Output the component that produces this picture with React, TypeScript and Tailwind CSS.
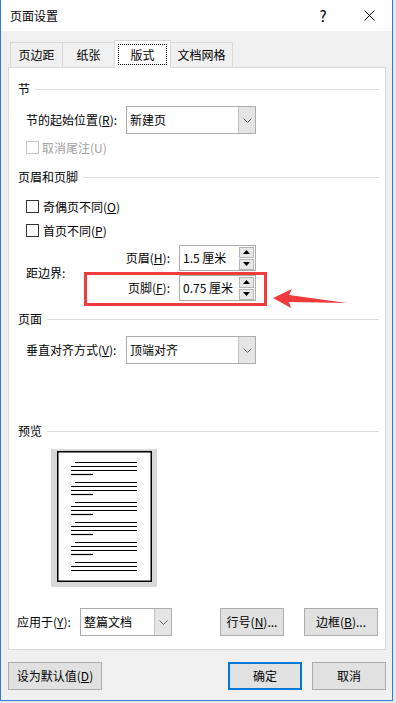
import React from "react";

const Chevron = () => (
  <svg width="9" height="5" viewBox="0 0 9 5">
    <polyline points="0.5,0.5 4.5,4.5 8.5,0.5" fill="none" stroke="#606060" strokeWidth="1" />
  </svg>
);

function Select({ text, w }: { text: string; w: string }) {
  return (
    <div className={`flex h-[28px] ${w} border border-[#acacac] bg-white`}>
      <div className="flex flex-1 items-center pl-[3px]">{text}</div>
      <div className="flex w-[17px] items-center justify-center border-l border-[#c4c4c4] bg-[#e5e5e5]">
        <Chevron />
      </div>
    </div>
  );
}

const Tri = ({ up }: { up: boolean }) => (
  <svg width="7" height="4" viewBox="0 0 7 4">
    <polygon points={up ? "3.5,0 7,4 0,4" : "0,0 7,0 3.5,4"} fill="#000" />
  </svg>
);

function Spinner({ text }: { text: string }) {
  return (
    <div className="ml-[9px] flex h-[26px] w-[77px] items-center border border-[#acacac] bg-white">
      <div className="flex-1 whitespace-nowrap pl-[3px]">{text}</div>
      <div className="mr-[1px] flex w-[15px] flex-col gap-[1px]">
        <div className="flex h-[11px] items-center justify-center border border-[#b4b4b4] bg-[#e8e8e8]">
          <Tri up />
        </div>
        <div className="flex h-[11px] items-center justify-center border border-[#b4b4b4] bg-[#e8e8e8]">
          <Tri up={false} />
        </div>
      </div>
    </div>
  );
}

function Header({ label, cls }: { label: string; cls: string }) {
  return (
    <div className={`flex h-[16px] items-center gap-[5px] pl-[9px] pr-[6px] ${cls}`}>
      <span>{label}</span>
      <div className="h-px flex-1 bg-[#dcdcdc]" />
    </div>
  );
}

function Box({ disabled }: { disabled?: boolean }) {
  return (
    <div
      className={`h-[13px] w-[13px] border bg-white ${disabled ? "border-[#c4c4c4]" : "border-[#333333]"}`}
    />
  );
}

function Btn({ children, cls }: { children: React.ReactNode; cls: string }) {
  return (
    <div
      className={`flex h-[28px] items-center justify-center whitespace-nowrap border border-[#adadad] bg-[#e1e1e1] ${cls}`}
    >
      {children}
    </div>
  );
}

function Preview() {
  const blocks = [0, 1, 2, 3, 4, 5];
  return (
    <svg width="106" height="138" viewBox="0 0 106 138">
      <rect x="0" y="0" width="106" height="138" fill="#d9d9d9" />
      <rect x="6.75" y="2.75" width="93.5" height="129.5" fill="#fff" stroke="#000" strokeWidth="1.5" />
      {blocks.map((b) => {
        const y = 13.5 + b * 20;
        return (
          <g key={b} stroke="#000" strokeWidth="1.2">
            <line x1="24" y1={y} x2="86" y2={y} />
            <line x1="20" y1={y + 4} x2="86" y2={y + 4} />
            <line x1="20" y1={y + 8} x2="86" y2={y + 8} />
            {b < 5 && <line x1="20" y1={y + 12} x2="42" y2={y + 12} />}
          </g>
        );
      })}
    </svg>
  );
}

export default function App() {
  return (
    <div className="relative flex h-[703px] w-[396px] bg-[#e6e6e6] font-['Noto_Sans_CJK_SC','Noto_Sans',sans-serif] text-[12px] leading-[16px] text-black">
      <div className="flex h-[701px] w-[393px] flex-col border-x border-b border-[#2b7fd3] bg-[#f0f0f0]">
        {/* Title bar */}
        <div className="flex h-[31px] items-center bg-white pl-[9px]">
          <span>页面设置</span>
          <div className="ml-auto flex h-full w-[46px] items-center justify-center text-[15px]">?</div>
          <div className="flex h-full w-[46px] items-center justify-center">
            <svg width="11" height="11" viewBox="0 0 11 11">
              <line x1="0.5" y1="0.5" x2="10.5" y2="10.5" stroke="#000" strokeWidth="1" />
              <line x1="10.5" y1="0.5" x2="0.5" y2="10.5" stroke="#000" strokeWidth="1" />
            </svg>
          </div>
        </div>

        <div className="flex flex-col pl-[7px] pr-[6px] pt-[9px]">
          {/* Tabs */}
          <div className="ml-[2px] flex h-[27px] items-end">
            <div className="flex h-[25px] w-[52px] items-center justify-center border-l border-t border-[#d9d9d9]">
              页边距
            </div>
            <div className="flex h-[25px] w-[52px] items-center justify-center border-l border-t border-[#d9d9d9]">
              纸张
            </div>
            <div className="relative z-10 -mb-px flex h-[28px] w-[57px] border-x border-t border-[#d9d9d9] bg-white p-[3px] pb-[3px]">
              <div className="flex flex-1 items-center justify-center border border-dotted border-black">版式</div>
            </div>
            <div className="flex h-[25px] w-[62px] items-center justify-center border-r border-t border-[#d9d9d9]">
              文档网格
            </div>
          </div>

          {/* Panel */}
          <div className="flex h-[583px] flex-col border border-[#d9d9d9] bg-white">
            <Header label="节" cls="mt-[13px]" />
            <div className="ml-[17px] mt-[9px] flex items-center">
              <div className="w-[100px] whitespace-nowrap">
                节的起始位置(<u>R</u>):
              </div>
              <Select text="新建页" w="w-[130px]" />
            </div>
            <div className="ml-[17px] mt-[7px] flex h-[13px] items-center gap-[3px]">
              <Box disabled />
              <span className="text-[#a0a0a0]">取消尾注(U)</span>
            </div>

            <Header label="页眉和页脚" cls="mt-[15px]" />
            <div className="ml-[17px] mt-[15px] flex h-[13px] items-center gap-[4px]">
              <Box />
              <span>
                奇偶页不同(<u>O</u>)
              </span>
            </div>
            <div className="ml-[17px] mt-[11px] flex h-[13px] items-center gap-[4px]">
              <Box />
              <span>
                首页不同(<u>P</u>)
              </span>
            </div>
            <div className="ml-[17px] mt-[8px] flex items-center">
              <div className="w-[100px]">距边界:</div>
              <div className="flex flex-col gap-[4px]">
                <div className="flex items-center">
                  <div className="flex w-[44px] justify-end whitespace-nowrap">
                    <span>
                      页眉(<u>H</u>):
                    </span>
                  </div>
                  <Spinner text="1.5 厘米" />
                </div>
                <div className="flex items-center">
                  <div className="flex w-[44px] justify-end whitespace-nowrap">
                    <span>
                      页脚(<u>F</u>):
                    </span>
                  </div>
                  <Spinner text="0.75 厘米" />
                </div>
              </div>
            </div>

            <Header label="页面" cls="mt-[10px]" />
            <div className="ml-[17px] mt-[9px] flex items-center">
              <div className="w-[100px] whitespace-nowrap">
                垂直对齐方式(<u>V</u>):
              </div>
              <Select text="顶端对齐" w="w-[130px]" />
            </div>

            <Header label="预览" cls="mt-[59px]" />
            <div className="ml-[42px] mt-[10px] flex">
              <Preview />
            </div>

            <div className="ml-[8px] mt-[21px] flex items-center">
              <div className="w-[63px] whitespace-nowrap">
                应用于(<u>Y</u>):
              </div>
              <Select text="整篇文档" w="w-[92px]" />
              <Btn cls="ml-[48px] w-[64px]">
                行号(<u>N</u>)...
              </Btn>
              <Btn cls="ml-[20px] w-[74px]">
                边框(<u>B</u>)...
              </Btn>
            </div>
          </div>

          {/* Bottom buttons */}
          <div className="mt-[12px] flex items-center">
            <Btn cls="w-[94px]">
              设为默认值(<u>D</u>)
            </Btn>
            <div className="ml-auto flex h-[28px] w-[74px] items-center justify-center border-2 border-[#0078d7] bg-[#e1e1e1]">
              确定
            </div>
            <Btn cls="ml-[10px] w-[74px]">取消</Btn>
          </div>
        </div>
      </div>

      {/* Annotation overlay: red box + arrow */}
      <div className="pointer-events-none absolute left-[84px] top-[272px] h-[34px] w-[183px] border-[3px] border-[#ef3b3b]" />
      <svg className="pointer-events-none absolute left-[270px] top-[285px]" width="80" height="26" viewBox="0 0 80 26">
        <polygon points="3,13 22,4 19,10 77,18 19,17 21,23" fill="#ef3b3b" />
      </svg>
    </div>
  );
}
